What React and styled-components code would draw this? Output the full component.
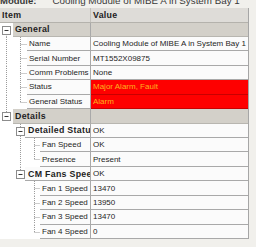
import React from 'react';
import styled, { createGlobalStyle } from 'styled-components';

const ROW_H = 14.45;
const MID = ROW_H / 2;

const GlobalStyle = createGlobalStyle`
    html, body {
        margin: 0;
        padding: 0;
        overflow: hidden;
        background: #f1f0ec;
    }
    body {
        font-family: "Liberation Sans", Arial, sans-serif;
    }
`;

const Page = styled.div`
    width: 256px;
    height: 247px;
    overflow: hidden;
`;

const TitleBar = styled.div`
    height: 16px;
    margin-top: -8px;
    display: flex;
    align-items: center;
    gap: 16px;
    padding-left: 0;
    color: #3a3a3a;
    white-space: nowrap;

    b {
        font-weight: bold;
        font-size: 9.5px;
    }

    span {
        font-size: 9.8px;
    }
`;

const Table = styled.div`
    width: 248px;
    border-right: 1px solid #a6a6a6;
    background: #fbfbfb;
`;

const Header = styled.div`
    display: grid;
    grid-template-columns: 91px 1fr;
    height: 14.5px;
    background: #dedcd8;
    border-bottom: 1px solid #b4b2ac;
    box-sizing: border-box;
    font-size: 8.8px;
    letter-spacing: 0.3px;
    font-weight: bold;
    color: #222;

    span {
        display: flex;
        align-items: center;
        padding-left: 2px;
    }

    span:first-child {
        border-right: 1px solid #c4c2bc;
    }
`;

const Row = styled.div`
    display: grid;
    grid-template-columns: 91px 1fr;
    height: ${ROW_H}px;
    font-size: 8px;
    color: #1e1e1e;
`;

const NameCell = styled.div`
    display: flex;
    min-width: 0;
    background: #fff;
`;

const Indent = styled.svg`
    flex: none;
    display: block;
`;

const Label = styled.div`
    flex: 1;
    min-width: 0;
    display: flex;
    align-items: center;
    padding-left: ${p => p.$pad}px;
    overflow: hidden;
    white-space: nowrap;
    font-weight: ${p => (p.$bold ? 'bold' : 'normal')};
    font-size: ${p => (p.$bold ? '8.8px' : '8px')};
    letter-spacing: ${p => (p.$bold ? '0.3px' : '0')};
    background: ${p => (p.$grey ? '#d3d0c9' : '#fbfbfb')};
    border-bottom: 1px solid ${p => (p.$grey ? '#b8b6b0' : '#a9a9a9')};
    border-right: 1px solid #a9a9a9;
    box-sizing: border-box;
`;

const Value = styled.div`
    display: flex;
    align-items: center;
    padding-left: 2px;
    overflow: hidden;
    white-space: nowrap;
    box-sizing: border-box;
    background: ${p => (p.$alarm ? '#fe0000' : p.$grey ? '#d3d0c9' : '#fbfbfb')};
    color: ${p => (p.$alarm ? '#ffb21e' : '#1e1e1e')};
    border-bottom: 1px solid ${p => (p.$alarm ? '#c80000' : p.$grey ? '#b8b6b0' : '#a9a9a9')};
`;

const L1 = 6.5;
const L2 = 20.5;
const L3 = 34.5;

const rows = [
    { label: 'General', group: true, width: 13, box: L1, lines: [[L1, 'bottom']] },
    { label: 'Name', value: 'Cooling Module of MIBE A in System Bay 1', width: 27, lines: [[L1, 'full'], [L2, 'full']], h: L2 },
    { label: 'Serial Number', value: 'MT1552X09875', width: 27, lines: [[L1, 'full'], [L2, 'full']], h: L2 },
    { label: 'Comm Problems', value: 'None', width: 27, lines: [[L1, 'full'], [L2, 'full']], h: L2 },
    { label: 'Status', value: 'Major Alarm, Fault', alarm: true, width: 27, lines: [[L1, 'full'], [L2, 'full']], h: L2 },
    { label: 'General Status', value: 'Alarm', alarm: true, width: 27, lines: [[L1, 'full'], [L2, 'top']], h: L2 },
    { label: 'Details', group: true, width: 13, box: L1, lines: [[L1, 'top']] },
    { label: 'Detailed Status', value: 'OK', sub: true, width: 25, box: L2, lines: [[L2, 'full']] },
    { label: 'Fan Speed', value: 'OK', width: 40, lines: [[L2, 'full'], [L3, 'full']], h: L3 },
    { label: 'Presence', value: 'Present', width: 40, lines: [[L2, 'full'], [L3, 'top']], h: L3 },
    { label: 'CM Fans Speed', value: 'OK', sub: true, width: 25, box: L2, lines: [[L2, 'top']] },
    { label: 'Fan 1 Speed', value: '13470', width: 40, lines: [[L3, 'full']], h: L3 },
    { label: 'Fan 2 Speed', value: '13950', width: 40, lines: [[L3, 'full']], h: L3 },
    { label: 'Fan 3 Speed', value: '13470', width: 40, lines: [[L3, 'full']], h: L3 },
    { label: 'Fan 4 Speed', value: '0', width: 40, lines: [[L3, 'top']], h: L3 },
];

const dots = { stroke: '#9a9a9a', strokeWidth: 1, strokeDasharray: '1 1' };

function TreeGuide({ width, lines, h, box }) {
    const yMid = Math.floor(MID) + 0.5;
    return (
        <Indent width={width} height={ROW_H} viewBox={`0 0 ${width} ${ROW_H}`}>
            {lines.map(([x, part], i) => {
                const y1 = part === 'bottom' ? MID : 0;
                const y2 = part === 'top' ? MID : ROW_H;
                return <line key={i} x1={x} x2={x} y1={y1} y2={y2} {...dots} />;
            })}
            {h !== undefined && <line x1={h} x2={width} y1={yMid} y2={yMid} {...dots} />}
            {box !== undefined && (
                <g>
                    <rect x={box - 4} y={yMid - 4} width={8} height={8} fill="#fff" stroke="#8c8c8c" />
                    <line x1={box - 2} x2={box + 2} y1={yMid} y2={yMid} stroke="#333" />
                </g>
            )}
        </Indent>
    );
}

export default function App() {
    return (
        <Page>
            <GlobalStyle />
            <TitleBar>
                <b>Module:</b>
                <span>Cooling Module of MIBE A in System Bay 1</span>
            </TitleBar>
            <Table>
                <Header>
                    <span>Item</span>
                    <span>Value</span>
                </Header>
                {rows.map(r => (
                    <Row key={r.label}>
                        <NameCell>
                            <TreeGuide width={r.width} lines={r.lines} h={r.h} box={r.box} />
                            <Label $bold={r.group || r.sub} $grey={r.group} $pad={r.sub ? 3 : 2}>
                                {r.label}
                            </Label>
                        </NameCell>
                        <Value $grey={r.group} $alarm={r.alarm}>{r.value}</Value>
                    </Row>
                ))}
            </Table>
        </Page>
    );
}
